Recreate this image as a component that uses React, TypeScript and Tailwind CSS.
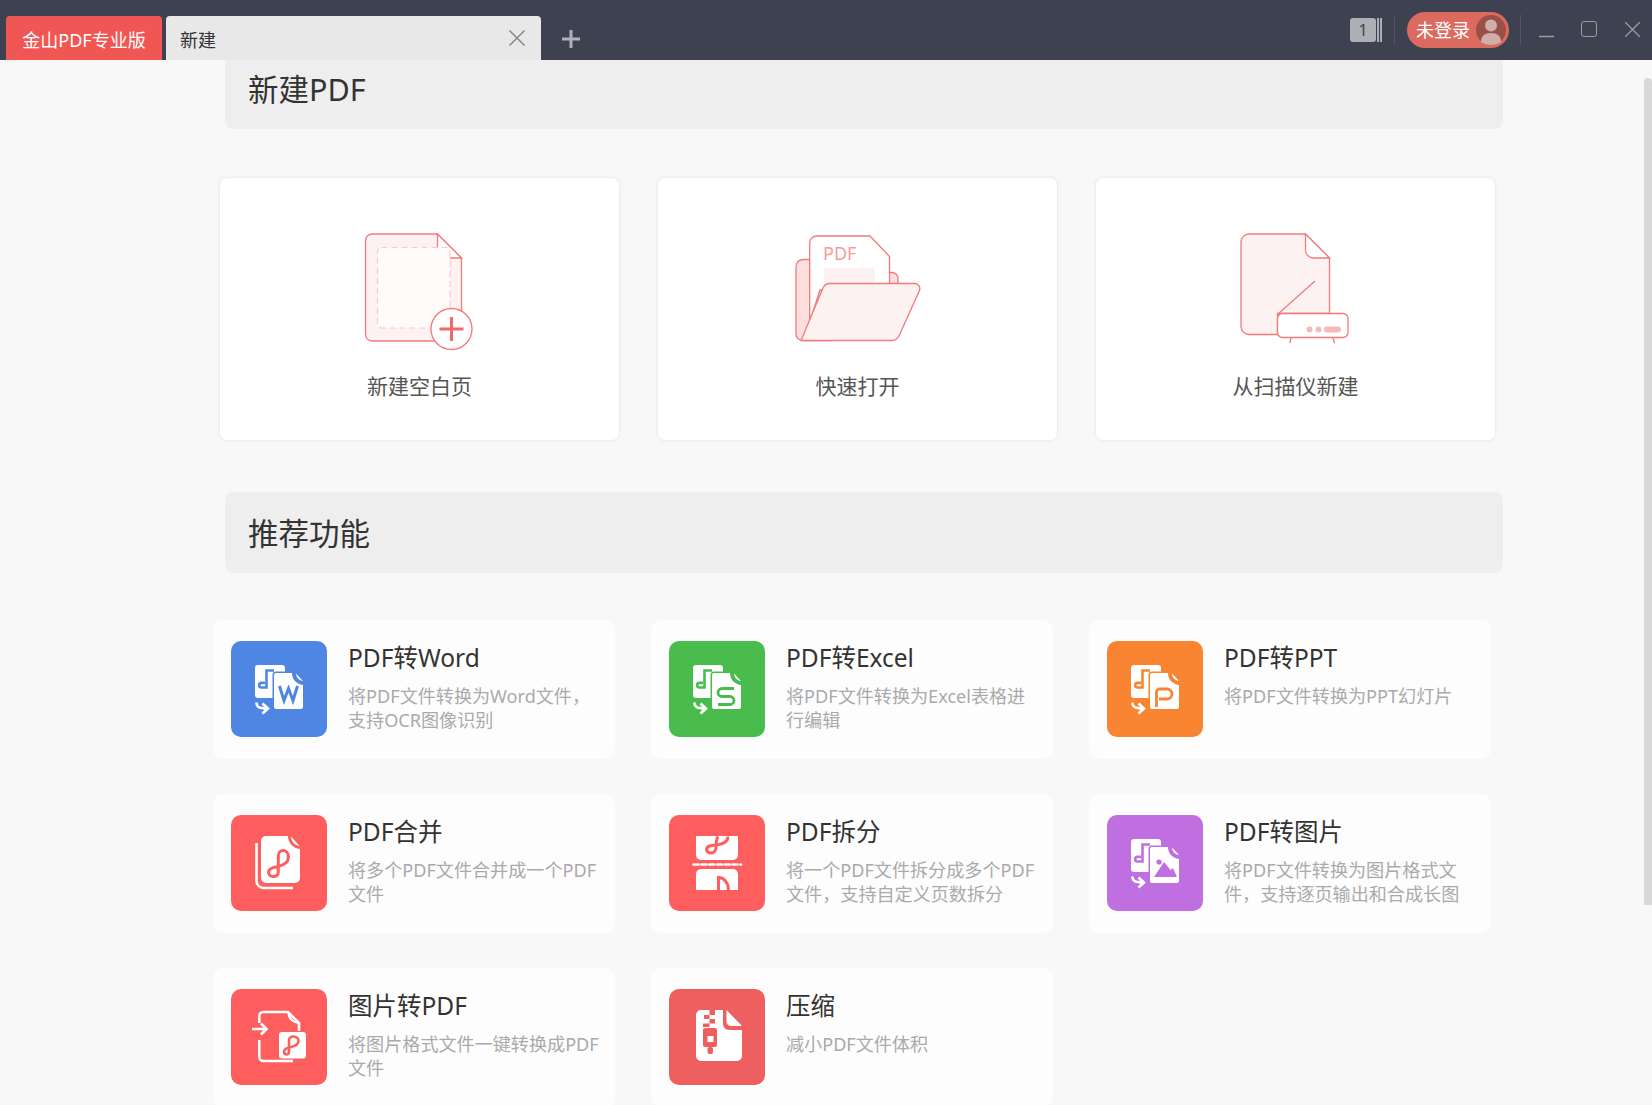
import React from "react";

const FONT = "[font-family:'Noto_Sans','Noto_Sans_CJK_SC',sans-serif]";

// shared "convert" glyph used by the Word / Excel / PPT / image tiles
function ConvertIcon({ color, children }: { color: string; children: React.ReactNode }) {
  return (
    <svg viewBox="0 0 96 96" className="h-full w-full">
      <rect x="24" y="24" width="30" height="33" rx="3" fill="#fff" />
      <path
        d="M43 29.5H35.5V46.5H30.5a2.3 2.3 0 0 1 0-4.6H34"
        fill="none"
        stroke={color}
        strokeWidth="2.6"
      />
      <path
        d="M45 32H61C61 38 65 43 72 44V66a2 2 0 0 1-2 2H45a2 2 0 0 1-2-2V34a2 2 0 0 1 2-2z"
        fill="#fff"
        stroke={color}
        strokeWidth="3"
        paintOrder="stroke"
      />
      <path d="M65 32.5L72 40C68 39.5 65.5 37 65 32.5z" fill="#fff" />
      <path
        d="M25.5 61.5C25.5 66 28 67.5 36 67.5M31.5 62.5L37 67.5L31.5 72.5"
        fill="none"
        stroke="#fff"
        strokeWidth="2.6"
      />
      {children}
    </svg>
  );
}

function WordIcon() {
  const c = "#4f86e3";
  return (
    <ConvertIcon color={c}>
      <path d="M48.500 45L53 59.500L57.500 47.500L62 59.500L66.500 45" fill="none" stroke={c} strokeWidth="3" />
    </ConvertIcon>
  );
}

function ExcelIcon() {
  const c = "#4abc4d";
  return (
    <ConvertIcon color={c}>
      <path d="M65 47.5H53a4 4 0 0 0 0 8H61a4 4 0 0 1 0 8H49" fill="none" stroke={c} strokeWidth="2.8" />
    </ConvertIcon>
  );
}

function PptIcon() {
  const c = "#f98431";
  return (
    <ConvertIcon color={c}>
      <path d="M49.500 66V51a3 3 0 0 1 3-3H60a5 5 0 0 1 0 10H52" fill="none" stroke={c} strokeWidth="2.8" />
    </ConvertIcon>
  );
}

function ImageIcon() {
  const c = "#bf6fdf";
  return (
    <ConvertIcon color={c}>
      <circle cx="52" cy="47" r="2.6" fill={c} />
      <path d="M47 62L57 47L63.5 55L66 53L70 62z" fill={c} />
    </ConvertIcon>
  );
}

function MergeIcon() {
  const c = "#ff5e5e";
  return (
    <svg viewBox="0 0 96 96" className="h-full w-full">
      <path d="M25.5 28V66a7 7 0 0 0 7 7H62" fill="none" stroke="#fff" strokeWidth="2.6" />
      <path
        d="M35 21H57C57 27 61 33 69 34V63a5 5 0 0 1-5 5H35a5 5 0 0 1-5-5V26a5 5 0 0 1 5-5z"
        fill="#fff"
      />
      <path d="M60 21.5L68.5 31C64 30.5 60.5 27 60 21.5z" fill="#fff" />
      <path
        d="M47.3 57V41C47.3 37.500 49.500 35.500 52 35.500C55 35.500 57.500 38 57.500 42C57.500 47 53 50 47 51.500C41 52.500 37.500 54 37.500 57C37.500 59.500 39.500 61.500 42 61.500C45 61.500 47.300 60 47.300 57"
        fill="none"
        stroke={c}
        strokeWidth="3"
      />
    </svg>
  );
}

function SplitIcon() {
  const c = "#ff5e5e";
  return (
    <svg viewBox="0 0 96 96" className="h-full w-full">
      <path d="M27 21H69V40a5 5 0 0 1-5 5H32a5 5 0 0 1-5-5z" fill="#fff" />
      <path
        d="M59 21.500C59 26 55 28.500 50 29.500C44 30.500 37.500 30 37.500 34.500C37.500 36.500 39.500 38 41.500 38C44.500 38 47 36 47 32.500C47 29 47 25 49 21.500"
        fill="none"
        stroke={c}
        strokeWidth="3"
      />
      <path d="M24.5 49.5H72" stroke="#fff" strokeWidth="2.6" strokeDasharray="5 2.8" strokeLinecap="round" fill="none" />
      <path d="M32 54H64a5 5 0 0 1 5 5V75H27V59a5 5 0 0 1 5-5z" fill="#fff" />
      <path d="M49.5 75V62.5C55 62.5 59.5 68 59.5 75" fill="none" stroke={c} strokeWidth="3" />
    </svg>
  );
}

function ImageToPdfIcon() {
  const c = "#ff5e5e";
  return (
    <svg viewBox="0 0 96 96" className="h-full w-full">
      <path
        d="M28.3 34V27a4 4 0 0 1 4-4H57L68 34V42M28.3 51V68a4 4 0 0 0 4 4H62"
        fill="none"
        stroke="#fff"
        strokeWidth="2.6"
      />
      <path d="M57.5 23C57.5 29 61 33 68 34" fill="none" stroke="#fff" strokeWidth="2.2" />
      <path d="M21 40H35M30 34.5L35.5 40L30 45.5" fill="none" stroke="#fff" strokeWidth="2.6" />
      <rect x="48" y="43" width="27" height="26.5" rx="3" fill="#fff" />
      <path
        d="M58 62V51.500C58 49 60 47.500 62.500 47.500C65.500 47.500 67.500 49.500 67.500 52C67.500 55 64.500 57 60 58C55.500 59 53 60 53 62.500C53 64.500 54.500 65.500 56 65.500C57.500 65.500 58 64 58 62"
        fill="none"
        stroke={c}
        strokeWidth="2.6"
      />
    </svg>
  );
}

function CompressIcon() {
  const c = "#ee6060";
  return (
    <svg viewBox="0 0 96 96" className="h-full w-full">
      <path d="M32 21H54V35a6 6 0 0 0 6 6H73V67a5 5 0 0 1-5 5H32a5 5 0 0 1-5-5V26a5 5 0 0 1 5-5z" fill="#fff" />
      <path d="M57.5 21L73 37H62a4.5 4.5 0 0 1-4.5-4.5z" fill="#fff" />
      <path
        d="M35 26h5.5v4h-5.5zM40.5 21h5.5v5h-5.5zM40.5 30h5.5v4.500h-5.500zM34 34.500h6.500v3.500h-6.500z"
        fill={c}
      />
      <path d="M36 39H46a2 2 0 0 1 2 2V56a2 2 0 0 1-2 2H36a2 2 0 0 1-2-2V41a2 2 0 0 1 2-2z" fill={c} />
      <rect x="38.500" y="47" width="6" height="6" fill="#fff" />
      <rect x="38.500" y="58" width="5.500" height="7" rx="2" fill={c} />
    </svg>
  );
}

const stroke = "#f27a7a";

function BlankPageArt() {
  return (
    <svg viewBox="20 22 140 120" className="h-[120px] w-[140px]">
      <path
        d="M42 24H107.500L131.500 48V125a6 6 0 0 1-6 6H42a6.500 6.500 0 0 1-6.500-6.500V30.500A6.500 6.500 0 0 1 42 24z"
        fill="#fdf1f1"
        stroke={stroke}
        strokeWidth="1.300"
      />
      <path d="M107.500 24V40a8 8 0 0 0 8 8H131.500z" fill="#fff" stroke={stroke} strokeWidth="1.300" />
      <rect x="47.500" y="37.500" width="72.500" height="80.500" rx="4" fill="#fffbfb" stroke="#fbcaca" strokeWidth="1.200" strokeDasharray="6 4" />
      <circle cx="121.500" cy="119" r="20.500" fill="#fff" stroke={stroke} strokeWidth="1.300" />
      <path d="M109.500 119H133.500M121.500 107V131" fill="none" stroke="#f06a6a" strokeWidth="3" />
    </svg>
  );
}

function OpenFileArt() {
  return (
    <svg viewBox="18 22 140 120" className="h-[120px] w-[140px]">
      <path
        d="M39.700 49.500H33a7 7 0 0 0-7 7V124a6.500 6.500 0 0 0 6.500 6.500H60V74H39.700z"
        fill="#fddfe0"
        stroke={stroke}
        strokeWidth="1.300"
      />
      <path d="M119 62.500H122a6 6 0 0 1 6 6V74H119z" fill="#fddfe0" stroke={stroke} strokeWidth="1.300" />
      <path
        d="M39.700 112V33a7 7 0 0 1 7-7H100L119.500 46.500V80H50z"
        fill="#fff"
        stroke={stroke}
        strokeWidth="1.300"
      />
      <text x="53" y="50" fontSize="18" fill="#f59b9b" fontFamily="'Noto Sans', sans-serif">
        PDF
      </text>
      <rect x="54" y="58" width="51" height="17" fill="#fdf1f1" />
      <path
        d="M59 73.500H145a5 5 0 0 1 4.500 7L129 126a8 8 0 0 1-7 4.500H31L53 78a8 8 0 0 1 6-4.500z"
        fill="#fdf2f2"
        stroke={stroke}
        strokeWidth="1.300"
      />
    </svg>
  );
}

function ScannerArt() {
  return (
    <svg viewBox="26 22 140 120" className="h-[120px] w-[140px]">
      <path
        d="M49 24H105.500L129.500 48V103.500H77.500V124.500H49a8 8 0 0 1-8-8V32a8 8 0 0 1 8-8z"
        fill="#fdf2f2"
        stroke={stroke}
        strokeWidth="1.300"
      />
      <path d="M105.500 24V40a8 8 0 0 0 8 8H129.500z" fill="#fff" stroke={stroke} strokeWidth="1.300" />
      <path d="M78 104L115 71" fill="none" stroke={stroke} strokeWidth="1.300" />
      <rect x="77.500" y="103.500" width="70.500" height="24" rx="5" fill="#fff" stroke={stroke} strokeWidth="1.300" />
      <circle cx="109.500" cy="119.500" r="3" fill="#f7b9b9" />
      <circle cx="118.500" cy="119.500" r="3" fill="#f7b9b9" />
      <rect x="124" y="116.500" width="17" height="6" rx="3" fill="#f7b9b9" />
      <path d="M91 128L90 133M133 128L134.500 133" fill="none" stroke={stroke} strokeWidth="1.300" />
    </svg>
  );
}

const features = [
  { title: "PDF转Word", desc: "将PDF文件转换为Word文件，\n支持OCR图像识别", bg: "bg-[#4f86e3]", Icon: WordIcon },
  { title: "PDF转Excel", desc: "将PDF文件转换为Excel表格进\n行编辑", bg: "bg-[#4abc4d]", Icon: ExcelIcon },
  { title: "PDF转PPT", desc: "将PDF文件转换为PPT幻灯片", bg: "bg-[#f98431]", Icon: PptIcon },
  { title: "PDF合并", desc: "将多个PDF文件合并成一个PDF\n文件", bg: "bg-[#ff5e5e]", Icon: MergeIcon },
  { title: "PDF拆分", desc: "将一个PDF文件拆分成多个PDF\n文件，支持自定义页数拆分", bg: "bg-[#ff5e5e]", Icon: SplitIcon },
  { title: "PDF转图片", desc: "将PDF文件转换为图片格式文\n件，支持逐页输出和合成长图", bg: "bg-[#bf6fdf]", Icon: ImageIcon },
  { title: "图片转PDF", desc: "将图片格式文件一键转换成PDF\n文件", bg: "bg-[#ff5e5e]", Icon: ImageToPdfIcon },
  { title: "压缩", desc: "减小PDF文件体积", bg: "bg-[#ee6060]", Icon: CompressIcon },
];

const newActions = [
  { label: "新建空白页", Art: BlankPageArt },
  { label: "快速打开", Art: OpenFileArt },
  { label: "从扫描仪新建", Art: ScannerArt },
];

function TitleBar() {
  return (
    <div className="flex h-[60px] shrink-0 items-end bg-[#3e4250]">
      <div className="ml-[6px] flex h-[44px] w-[156px] items-center justify-center rounded-t-[4px] bg-[#f05654] pt-[5px] text-[18px] text-white">
        金山PDF专业版
      </div>
      <div className="ml-[4px] flex h-[44px] w-[375px] items-center justify-between rounded-t-[4px] bg-[#e8e8e8] pl-[14px] pr-[15px] text-[18px] text-[#333]">
        <span className="pt-[5px]">新建</span>
        <svg viewBox="0 0 18 18" className="h-[18px] w-[18px]">
          <path d="M1.500 1.500L16.500 16.500M16.500 1.500L1.500 16.500" stroke="#888" strokeWidth="1.500" fill="none" />
        </svg>
      </div>
      <svg viewBox="0 0 20 20" className="mb-[11px] ml-[20px] h-[20px] w-[20px]">
        <path d="M10 1V19M1 10H19" stroke="#b0b2b8" strokeWidth="3" fill="none" />
      </svg>

      <div className="ml-auto flex h-full items-center">
        <div className="flex h-[24px] w-[26px] items-center justify-center rounded-[3px] bg-[#adafb6] text-[16px] text-[#444]">
          1
        </div>
        <div className="ml-[1px] h-[24px] w-[2px] bg-[#adafb6]" />
        <div className="ml-[1px] h-[24px] w-[2px] bg-[#adafb6]" />
        <div className="ml-[12px] h-[30px] w-px bg-[#52566a]" />
        <div className="ml-[12px] flex h-[36px] w-[102px] items-center justify-between rounded-full bg-[#dc6a5e] pl-[9px] pr-[3px] text-[18px] text-white">
          <span>未登录</span>
          <svg viewBox="0 0 30 30" className="h-[30px] w-[30px]">
            <circle cx="15" cy="15" r="15" fill="#9a5048" />
            <circle cx="15" cy="10.500" r="6" fill="#d0afab" />
            <path d="M5 27C5 21 9 18 15 18C21 18 25 21 25 27C22 29 19 30 15 30C11 30 8 29 5 27z" fill="#d0afab" />
          </svg>
        </div>
        <div className="ml-[11px] h-[30px] w-px bg-[#52566a]" />
        <svg viewBox="0 0 15 15" className="ml-[18px] mt-[12px] h-[15px] w-[15px]">
          <path d="M0 7.500H15" stroke="#9a9ca5" strokeWidth="1.500" />
        </svg>
        <div className="mb-[2px] ml-[27px] h-[16px] w-[16px] rounded-[3px] border-[1.500px] border-[#9a9ca5]" />
        <svg viewBox="0 0 15 15" className="mb-[2px] ml-[28px] mr-[12px] h-[15px] w-[15px]">
          <path d="M0 0L15 15M15 0L0 15" stroke="#9a9ca5" strokeWidth="1.300" fill="none" />
        </svg>
      </div>
    </div>
  );
}

export default function App() {
  return (
    <div className={`${FONT} flex h-screen flex-col overflow-hidden bg-[#f8f8f8]`}>
      <TitleBar />
      <div className="flex min-h-0 flex-1 overflow-hidden">
        <main className="min-w-0 flex-1">
          <section className="ml-[225px] h-[69px] w-[1278px] rounded-b-[8px] bg-[#eeeeee] pl-[23px] pt-[12px] text-[30.5px] leading-[34px] text-[#333]">
            新建PDF
          </section>

          <div className="ml-[219px] mt-[48px] flex gap-[37px]">
            {newActions.map(({ label, Art }) => (
              <div
                key={label}
                className="flex h-[264px] w-[401px] flex-col items-center rounded-[8px] border border-[#eeeeee] bg-white pt-[54px] shadow-[0_0_4px_rgba(0,0,0,0.04)]"
              >
                <Art />
                <span className="mt-[20px] text-[21px] leading-[28px] text-[#555]">{label}</span>
              </div>
            ))}
          </div>

          <section className="ml-[225px] mt-[51px] flex h-[81px] w-[1278px] items-center rounded-[8px] bg-[#eeeeee] pl-[23px] pt-[2px] text-[30.5px] text-[#333]">
            推荐功能
          </section>

          <div className="ml-[213px] mt-[47px] grid w-[1278px] grid-cols-[402px_402px_402px] gap-x-[36px] gap-y-[35px]">
            {features.map(({ title, desc, bg, Icon }) => (
              <div key={title} className="flex h-[139px] rounded-[10px] bg-[#fdfdfd] pl-[18px] pt-[21px]">
                <div className={`h-[96px] w-[96px] shrink-0 rounded-[10px] ${bg}`}>
                  <Icon />
                </div>
                <div className="ml-[21px]">
                  <h3 className="text-[24.5px] font-normal leading-[33px] text-[#333]">{title}</h3>
                  <p className="mt-[10px] whitespace-pre-line text-[18.1px] leading-[24px] text-[#aaaaaa]">{desc}</p>
                </div>
              </div>
            ))}
          </div>
        </main>
        <div className="w-[8px] shrink-0 pt-[18px]">
          <div className="h-[827px] rounded-t-[4px] bg-[#d8d8d8]" />
        </div>
      </div>
    </div>
  );
}
